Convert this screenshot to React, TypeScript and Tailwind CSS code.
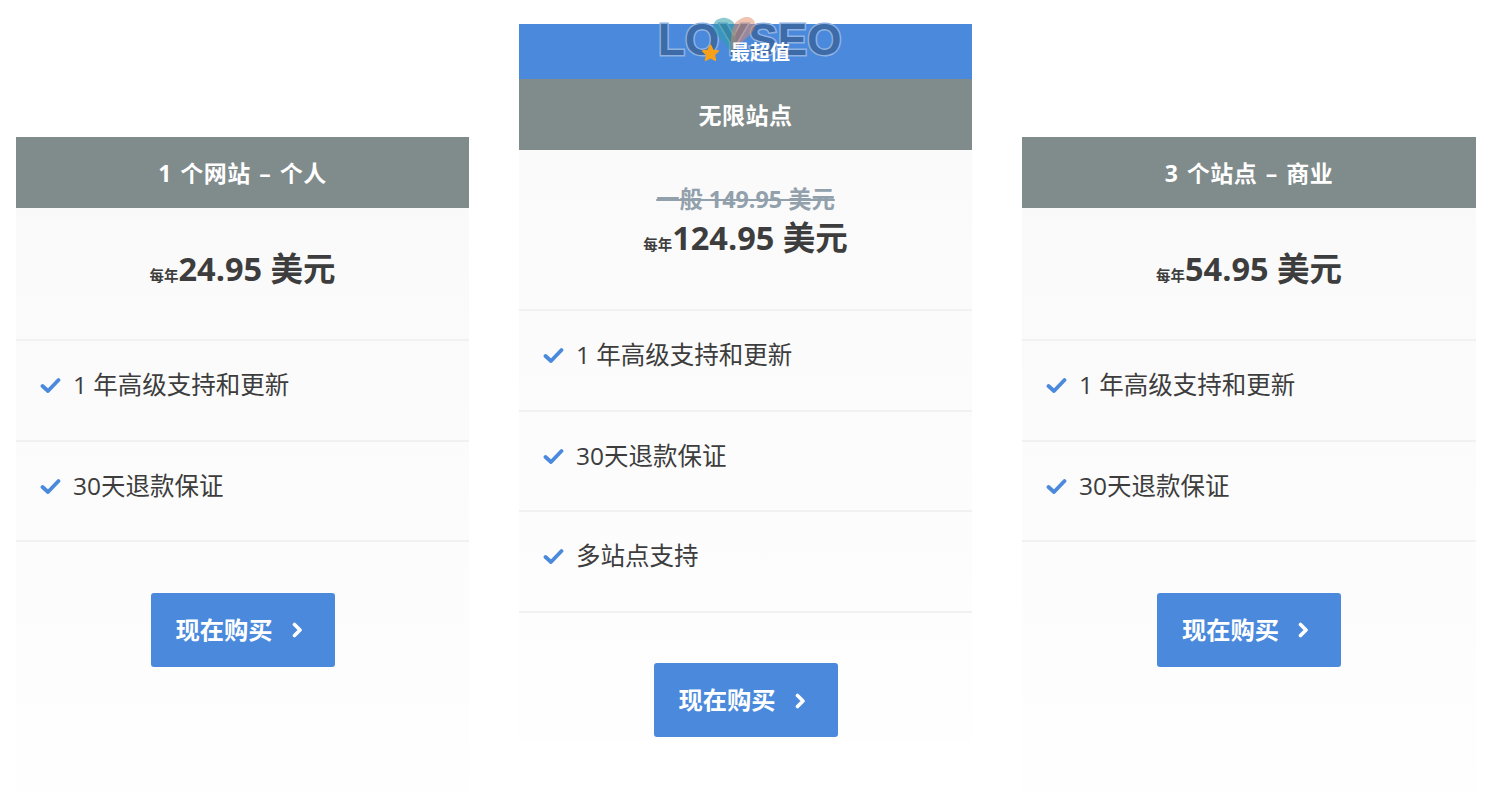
import React from 'react';

interface PlanProps {
  title: string;
  price: string;
  features: string[];
  oldPrice?: string;
  featured?: boolean;
}

const font = "font-['Open_Sans','Noto_Sans_CJK_SC',sans-serif]";

const Check = () => (
  <svg className="w-[21px] h-[17px] shrink-0" viewBox="0 0 21 17" fill="none">
    <path d="M2.5 9 L8 14 L18.5 3" stroke="#4a89dc" strokeWidth="3.8" strokeLinecap="round" strokeLinejoin="round" />
  </svg>
);

const Chevron = () => (
  <svg className="w-[11px] h-[16px] ml-[19px]" viewBox="0 0 11 16" fill="none">
    <path d="M2.5 2.5 L8 8 L2.5 13.5" stroke="#fff" strokeWidth="3.6" strokeLinecap="round" strokeLinejoin="round" />
  </svg>
);

const Logo = () => (
  <div className="absolute left-[139px] top-[-16px] w-[190px] h-[46px] pointer-events-none">
    <span className="absolute left-0 top-[13px] text-[44px] leading-[38px] font-bold text-[#3c6ba8] [-webkit-text-stroke:3px_#8fb2e2] [paint-order:stroke_fill] font-['Liberation_Sans',sans-serif]">
      LOYSEO
    </span>
    <svg className="absolute left-[53px] top-[9px] w-[66px] h-[36px]" viewBox="0 0 66 36">
      <path d="M11 1 C3 2 0 9 4 15 C8 22 15 27 21 35 C26 26 26 12 23 6 C21 3 15 0 11 1 Z" fill="#2f9fa8" fillOpacity="0.55" />
      <path d="M37 0 C44 1 46 8 42 14 C37 21 28 27 21 35 C19 26 20 12 24 6 C27 3 33 -1 37 0 Z" fill="#e08a62" fillOpacity="0.5" />
    </svg>
  </div>
);

const Plan: React.FC<PlanProps> = ({ title, price, features, oldPrice, featured }) => {
  return (
    <div className={`w-[453px] last:w-[454px] shrink-0 flex flex-col bg-gradient-to-b from-[#f9f9f9] to-[#fefefe] ${featured ? 'mt-[24px] h-[716px]' : 'mt-[137px] h-[655px]'}`}>
      {featured && (
        <div className="relative h-[55px] bg-[#4a89dc] flex items-center justify-center gap-[10px] pt-[3px] text-white">
          <Logo />
          <svg className="relative w-[19px] h-[18px]" viewBox="0 0 24 24" fill="#f7a11a">
            <path d="M12 1.5 L15.2 8.3 L22.6 9.2 L17.1 14.3 L18.6 21.7 L12 18 L5.4 21.7 L6.9 14.3 L1.4 9.2 L8.8 8.3 Z" stroke="#f7a11a" strokeWidth="2" strokeLinejoin="round" />
          </svg>
          <span className="relative text-[20px] font-bold leading-none">最超值</span>
        </div>
      )}
      <div className="h-[71px] bg-[#808b8b] flex items-center justify-center pt-[2px] text-white text-[23px] font-bold tracking-[0.5px] [word-spacing:2px]">
        {title}
      </div>
      <div className={`flex flex-col items-center border-b-2 border-[#f1f1f1] ${featured ? 'h-[161px] pt-[31px]' : 'h-[133px] pt-[40px]'}`}>
        {oldPrice && (
          <div className="text-[23.3px] leading-[36px] h-[36px] font-bold text-[#92a0ac] line-through">{oldPrice}</div>
        )}
        <div className="flex items-baseline text-[#3d3d3d] font-bold leading-[46px] -mt-[2px]">
          <span className="text-[14.5px]">每年</span>
          <span className="text-[32.5px]">{price}</span>
        </div>
      </div>
      {features.map((f) => (
        <div key={f} className="h-[100.5px] flex items-center gap-[12px] pl-[24px] pb-[9px] border-b-2 border-[#f1f1f1] text-[24.5px] text-[#3d3d3d]">
          <Check />
          <span>{f}</span>
        </div>
      ))}
      <div className="flex justify-center pt-[50.5px]">
        <div className="w-[184px] h-[74px] rounded-[3px] bg-[#4a89dc] flex items-center justify-center pr-[7px] pt-[1px] text-white text-[24.3px] font-bold">
          现在购买
          <Chevron />
        </div>
      </div>
    </div>
  );
};

const App: React.FC = () => {
  return (
    <div className={`h-[792px] overflow-hidden bg-white flex gap-[50px] pl-[16px] ${font}`}>
      <Plan title="1 个网站 – 个人" price="24.95 美元" features={['1 年高级支持和更新', '30天退款保证']} />
      <Plan
        featured
        title="无限站点"
        oldPrice="一般 149.95 美元"
        price="124.95 美元"
        features={['1 年高级支持和更新', '30天退款保证', '多站点支持']}
      />
      <Plan title="3 个站点 – 商业" price="54.95 美元" features={['1 年高级支持和更新', '30天退款保证']} />
    </div>
  );
};

export default App;
